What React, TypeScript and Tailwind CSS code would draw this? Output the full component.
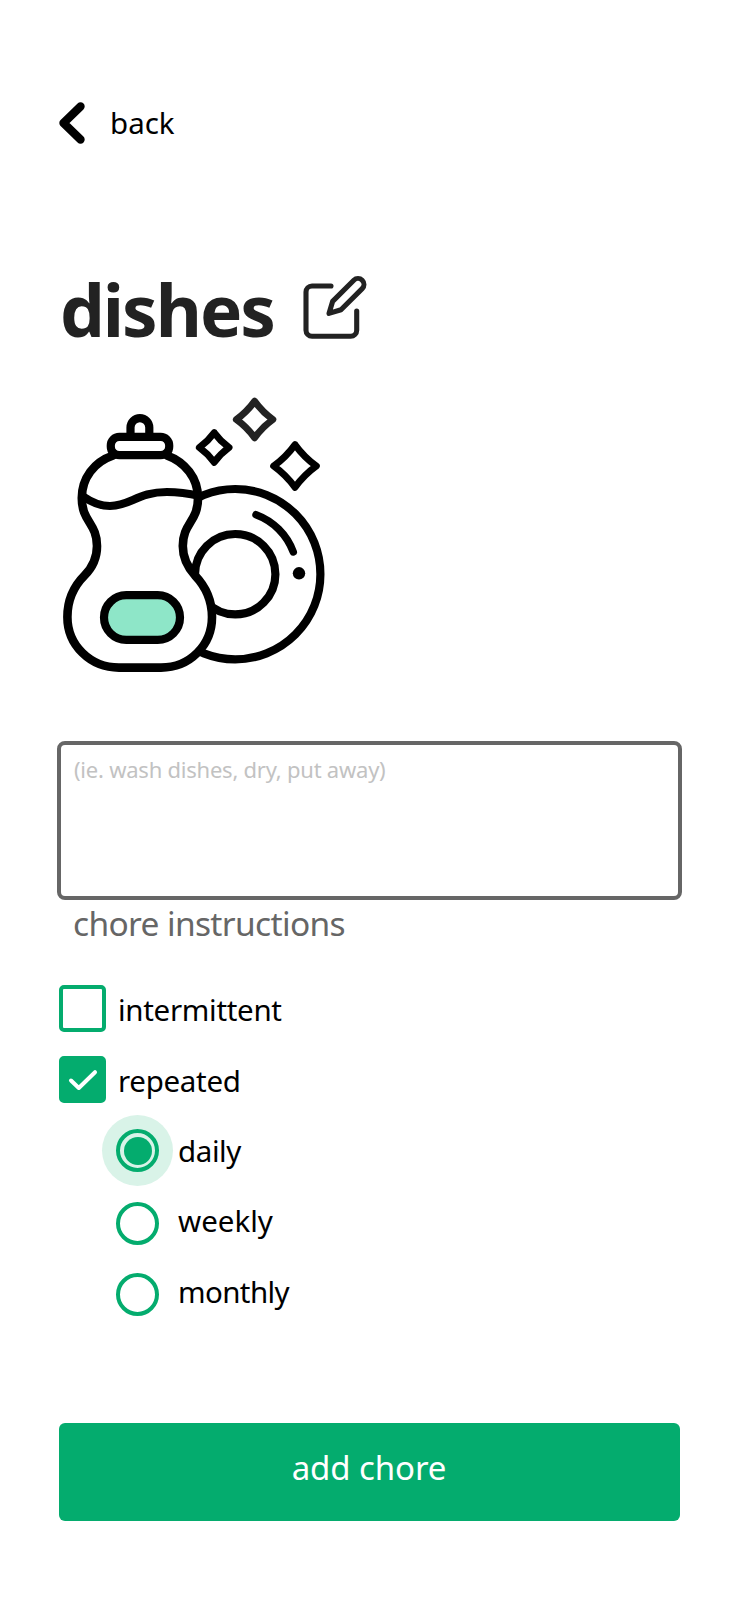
import React, { useState } from "react";

const bodyPath =
  "M113 455.5C94 462 81.8 478 81.8 498C81.8 522 97 523 97 546C97 558 92 568 84.5 575.5C73.5 586.5 67.4 601 67.4 617C67.4 645 90 667.6 119 667.6H161C190 667.6 212 645 212 617C212 601 206 587 195 575.5C187.5 567 182.8 558 182.8 546C182.8 523 198 522 198 498C198 478 185 462 167 455.5";

function Sparkle({ x, y, r, color }: { x: number; y: number; r: number; color: string }) {
  const k = r * 0.42;
  const d = `M${x} ${y - r}Q${x + k} ${y - k} ${x + r} ${y}Q${x + k} ${y + k} ${x} ${y + r}Q${x - k} ${y + k} ${x - r} ${y}Q${x - k} ${y - k} ${x} ${y - r}Z`;
  return <path d={d} stroke={color} strokeWidth="7" fill="none" />;
}

function DishesArt() {
  return (
    <svg viewBox="50 390 290 290" className="-ml-[9px] block h-[290px] w-[290px]" fill="none" stroke="#000" strokeWidth="8.2" strokeLinecap="round" strokeLinejoin="round">
      <circle cx="235.2" cy="574.2" r="85.2" />
      <circle cx="235.2" cy="574.2" r="40.2" />
      <path d="M256 514.7A63 63 0 0 1 293.3 552" strokeWidth="7.5" />
      <circle cx="299" cy="573.3" r="6.2" fill="#000" stroke="none" />
      <path d={bodyPath} fill="#fff" strokeWidth="8.6" />
      <path d="M84 497C94 504 102 506 110 506C130 506 138 492 167 492C180 492 191 494 200 496" />
      <path d="M130.5 435V427.5a9.4 9.4 0 0 1 18.8 0V435" />
      <rect x="110.8" y="436.8" width="58.4" height="18.4" rx="8.5" fill="#fff" />
      <rect x="104" y="595.2" width="76" height="44.7" rx="22.3" fill="#8ee6c8" />
      <Sparkle x={214.2} y={447.5} r={14.8} color="#000" />
      <Sparkle x={254.6} y={419.5} r={18.2} color="#222" />
      <Sparkle x={295} y={466} r={21.3} color="#000" />
    </svg>
  );
}

function EditIcon() {
  return (
    <svg viewBox="300 270 70 72" className="h-[72px] w-[70px]" fill="none" stroke="#222" strokeWidth="5.1" strokeLinecap="round" strokeLinejoin="round">
      <path d="M331 286H312a6 6 0 0 0-6 6V330.3a6 6 0 0 0 6 6H350.7a6 6 0 0 0 6-6V311" />
      <path d="M329 313.4L332.6 301.4L353.8 280.2a5.9 5.9 0 0 1 8.4 8.4L341 309.8Z" />
    </svg>
  );
}

function Checkbox({ label, checked, onClick, text }: { label: string; checked: boolean; onClick: () => void; text: string }) {
  return (
    <button type="button" role="checkbox" aria-checked={checked} onClick={onClick} className="flex h-[47px] items-center">
      <span className={"flex size-[47px] items-center justify-center rounded-[5px] border-4 border-[#04ac6e] " + (checked ? "bg-[#04ac6e]" : "bg-white")}>
        {checked && (
          <svg viewBox="0 0 30 22" className="h-[22px] w-[30px] shrink-0" fill="none" stroke="#fff" strokeWidth="4" strokeLinecap="round" strokeLinejoin="round">
            <path d="M3 11.5L10.8 19L27 3.2" />
          </svg>
        )}
      </span>
      <span className={"ml-3 leading-[40px] " + text}>{label}</span>
    </button>
  );
}

function Radio({ label, selected, onClick, text }: { label: string; selected: boolean; onClick: () => void; text: string }) {
  return (
    <button type="button" role="radio" aria-checked={selected} onClick={onClick} className="flex h-[71px] items-center">
      <span className={"flex size-[71px] items-center justify-center rounded-full " + (selected ? "bg-[#d9f3e8]" : "")}>
        <span className="flex size-[43px] items-center justify-center rounded-full border-4 border-[#04ac6e]">
          {selected && <span className="size-7 rounded-full bg-[#04ac6e]" />}
        </span>
      </span>
      <span className={"ml-[5px] leading-[40px] " + text}>{label}</span>
    </button>
  );
}

export default function App() {
  const [intermittent, setIntermittent] = useState(false);
  const [repeated, setRepeated] = useState(true);
  const [frequency, setFrequency] = useState("daily");

  return (
    <main className="flex h-[1600px] w-[739px] flex-col items-start bg-white pl-[59px] pr-[58px] pt-[100px] font-['Noto_Sans',sans-serif] text-black">
      <button type="button" className="flex h-[46px] items-center">
        <svg viewBox="59 100 28 46" className="h-[46px] w-[28px]" fill="none" stroke="#000" strokeWidth="8.4" strokeLinecap="round" strokeLinejoin="round">
          <path d="M80.5 106.5L63.5 123L80.5 139.5" />
        </svg>
        <span className="ml-[23px] text-[29.5px] leading-[40px]">back</span>
      </button>

      <div className="mt-[124px] flex h-[72px] items-start">
        <h1 className="ml-px mt-[4px] w-[240px] text-[71px] font-bold leading-[72px] tracking-[-2px] text-[#222]">dishes</h1>
        <EditIcon />
      </div>

      <div className="mt-[48px]">
        <DishesArt />
      </div>

      <textarea
        placeholder="(ie. wash dishes, dry, put away)"
        className="-ml-[2px] mt-[61px] block h-[159px] w-[625px] resize-none rounded-[8px] border-4 border-[#666] bg-white px-[13px] py-[9px] text-[22px] leading-[30px] tracking-[-0.23px] outline-none placeholder:text-[#c2c2c2]"
      />
      <p className="ml-[14px] mt-[3px] text-[33.5px] leading-[40px] tracking-[-0.65px] text-[#666]">chore instructions</p>

      <div className="mt-[42px] flex flex-col gap-6">
        <Checkbox label="intermittent" checked={intermittent} onClick={() => setIntermittent(!intermittent)} text="pt-[2px] text-[29.5px] tracking-[-0.3px]" />
        <Checkbox label="repeated" checked={repeated} onClick={() => setRepeated(!repeated)} text="pt-[2px] text-[29.5px] tracking-[-0.3px]" />
      </div>

      <div role="radiogroup" className="ml-[43px] mt-[12px] flex flex-col items-start">
        <Radio label="daily" selected={frequency === "daily"} onClick={() => setFrequency("daily")} text="pt-px text-[29.5px] tracking-[-0.4px]" />
        <div className="mt-[2px] flex flex-col items-start">
          <Radio label="weekly" selected={frequency === "weekly"} onClick={() => setFrequency("weekly")} text="pb-[6px] text-[29.5px]" />
          <Radio label="monthly" selected={frequency === "monthly"} onClick={() => setFrequency("monthly")} text="pb-[6px] text-[29.5px] tracking-[-0.6px]" />
        </div>
      </div>

      <button type="button" className="mt-[93px] flex h-[98px] w-[621px] items-center justify-center rounded-[6px] bg-[#04ac6e] pb-[8px] pr-px text-[33px] leading-[40px] tracking-[-0.1px] text-white">
        add chore
      </button>
    </main>
  );
}
